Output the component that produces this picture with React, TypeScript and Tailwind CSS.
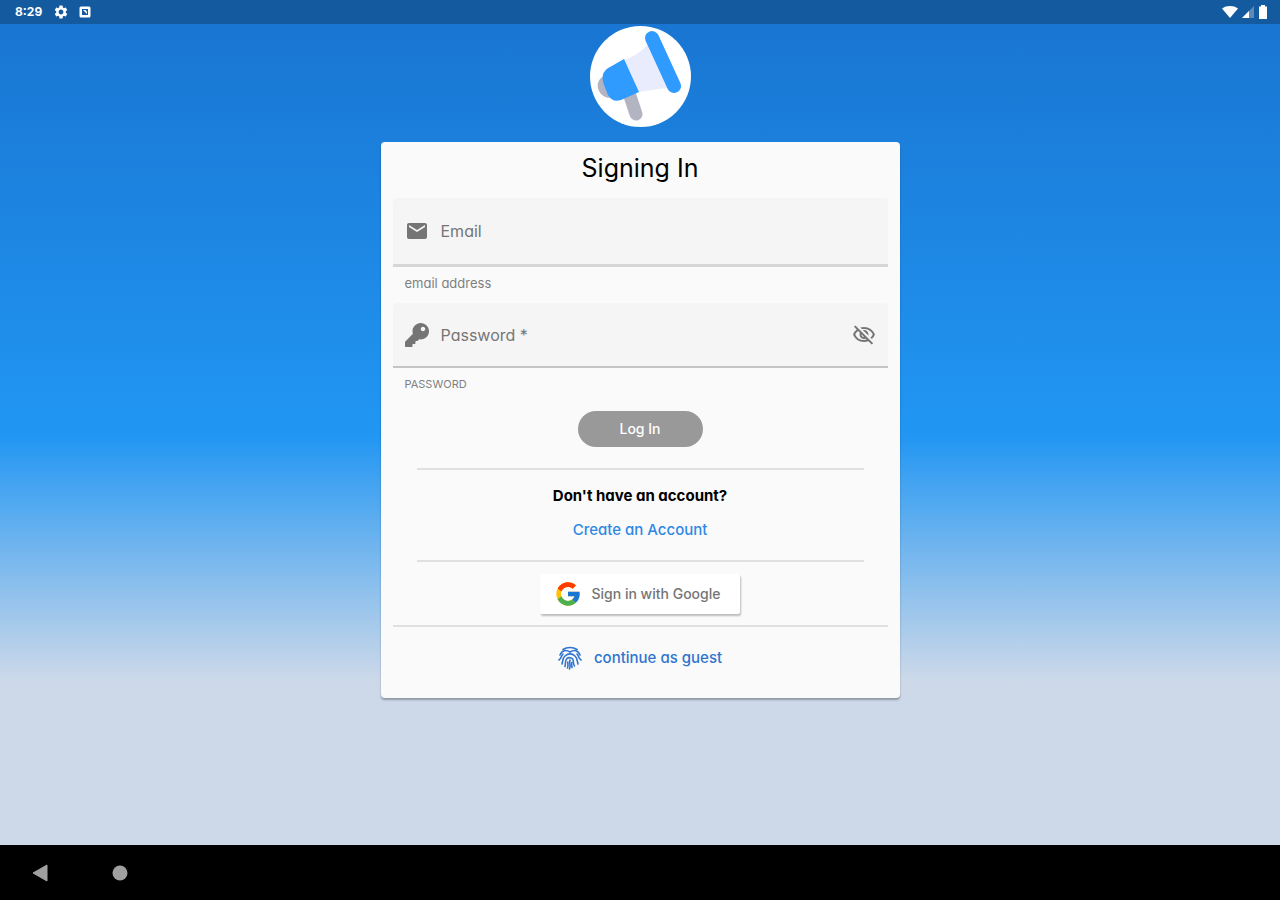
import { useState } from "react";
import { FaKey } from "react-icons/fa";
import { FcGoogle } from "react-icons/fc";
import {
  MdEmail,
  MdOutlineVisibility,
  MdOutlineVisibilityOff,
  MdSettings,
} from "react-icons/md";

const StatusBar = () => (
  <header className="flex h-6 items-center justify-between bg-[#145a9f] pl-[15px] pr-3 text-white">
    <div className="flex items-center gap-2.5">
      <span className="w-7 text-xs font-bold">8:29</span>
      <MdSettings className="h-4 w-4" />
      <svg viewBox="0 0 12 12" className="h-3 w-3">
        <rect x="0.5" y="0.5" width="11" height="11" rx="1.5" fill="currentColor" />
        <path d="M3 3h6v6H3z" fill="#145a9f" />
        <path d="M4 4l4 4V5.500L6.500 4z" fill="currentColor" />
      </svg>
    </div>
    <div className="flex items-center gap-1">
      <svg viewBox="0 0 16 12" className="h-3 w-4">
        <path d="M0 2.500C4.500-.8 11.500-.8 16 2.500L8 12z" fill="currentColor" />
      </svg>
      <svg viewBox="0 0 12 12" className="h-3 w-3">
        <path d="M12 0v12H0z" fill="currentColor" opacity="0.3" />
        <path d="M7 5v7H0z" fill="currentColor" />
      </svg>
      <svg viewBox="0 0 10 14" className="h-3.5 w-2.5">
        <path d="M3 0h4v1.500h2V14H1V1.500h2z" fill="currentColor" />
      </svg>
    </div>
  </header>
);

const Logo = () => (
  <svg viewBox="0 0 101 101" className="h-[101px] w-[101px]" role="img" aria-label="Megaphone">
    <circle cx="50.5" cy="50.5" r="50.5" fill="#fff" />
    <path d="M14 50c-6 3-8 9-5 15 3 6 9 8 14 6z" fill="#b3b4c2" />
    <path d="M40 70l6 18" stroke="#b3b4c2" strokeWidth="13" strokeLinecap="round" />
    <path d="M34 34C43 31 51 26 57 19l20 43c-9 1-19 2-28 4z" fill="#e9ecfd" />
    <path d="M34 33l15 33-18 8c-6 2-10 0-13-5l-4-10c-2-6-2-11 1-14 1-2 3-3 5-4z" fill="#2f9bff" />
    <path d="M62 12l22 48" stroke="#2f9bff" strokeWidth="14" strokeLinecap="round" />
  </svg>
);

const GuestIcon = () => (
  <svg
    viewBox="0 0 24 24"
    className="h-6 w-6"
    fill="none"
    stroke="currentColor"
    strokeWidth="1.6"
    strokeLinecap="round"
  >
    <path d="M5 3.500C9 .8 15 .8 19 3.500" />
    <path d="M2 9c2-5 6-5.500 10-3 4-2.500 8-2 10 3" />
    <path d="M1 14c2.500-1.500 2-4 4-6" />
    <path d="M23 14c-2.500-1.500-2-4-4-6" />
    <path d="M4 18c1-3 .5-6 3-8 3-2.500 7-2.500 10 0 2.500 2 2 5 3 8" />
    <path d="M7 20.500c1-3-.5-6 2-8 2-1.500 5-1 6 1 .8 2-.5 4 1.500 6.500" />
    <path d="M12 14c-1 3 1 5-.5 9" />
    <path d="M9.500 22c1-2 .3-4 .3-6M14 21.500c-.5-1.500-.5-3-.2-5" />
  </svg>
);

const LoginForm = () => {
  const [visible, setVisible] = useState(false);

  return (
    <form className="flex flex-col" onSubmit={(e) => e.preventDefault()}>
      <div className="flex h-[69px] items-center rounded-t border-b-3 border-[#d6d6d6] bg-[#f5f5f5] px-3 text-[#757575]">
        <MdEmail className="h-6 w-6" />
        <label htmlFor="email" className="ml-3 text-base">
          Email
        </label>
        <input
          id="email"
          type="email"
          aria-describedby="email-hint"
          className="ml-2 min-w-0 flex-1 bg-transparent text-base outline-none"
        />
      </div>
      <p id="email-hint" className="mt-2 px-3 text-[13px] leading-4 text-[#808080]">
        email address
      </p>

      <div className="mt-3 flex h-[65px] items-center rounded-t border-b-2 border-[#c4c4c4] bg-[#f5f5f5] px-3 text-[#757575]">
        <FaKey className="h-6 w-6" />
        <label htmlFor="password" className="ml-3 text-base">
          Password *
        </label>
        <input
          id="password"
          type={visible ? "text" : "password"}
          aria-describedby="password-hint"
          className="ml-2 min-w-0 flex-1 bg-transparent text-base outline-none"
        />
        <button
          type="button"
          aria-label="Toggle password visibility"
          onClick={() => setVisible(!visible)}
        >
          {visible ? (
            <MdOutlineVisibility className="h-6 w-6" />
          ) : (
            <MdOutlineVisibilityOff className="h-6 w-6" />
          )}
        </button>
      </div>
      <p id="password-hint" className="mt-2 px-3 text-[11px] leading-4 text-[#808080]">
        PASSWORD
      </p>

      <button
        type="submit"
        className="mt-[19px] h-9 w-[125px] self-center rounded-full bg-[#999] text-sm font-medium text-white"
      >
        Log In
      </button>
    </form>
  );
};

const NavigationBar = () => (
  <nav className="flex h-[55px] items-center gap-16 bg-black px-8 text-[#a0a0a0]">
    <button aria-label="Back">
      <svg viewBox="0 0 16 18" className="h-[18px] w-4">
        <path d="M15 1v16L1 9z" fill="currentColor" stroke="currentColor" strokeLinejoin="round" />
      </svg>
    </button>
    <button aria-label="Home">
      <svg viewBox="0 0 16 16" className="h-4 w-4">
        <circle cx="8" cy="8" r="7.5" fill="currentColor" />
      </svg>
    </button>
  </nav>
);

export default function App() {
  return (
    <div className="flex min-h-screen flex-col font-[Inter,'Open_Sans',sans-serif] [font-feature-settings:'cv11']">
      <StatusBar />
      <main className="flex flex-1 flex-col items-center bg-[linear-gradient(#1976d2,#2196f3_50%,#cdd9e9_80%)] px-4 pb-8 pt-0.5">
        <Logo />
        <section className="mt-[15px] w-full max-w-[519px] rounded bg-[#fafafa] px-3 pb-7 shadow-[0_2px_2px_rgba(0,0,0,0.3)]">
          <h1 className="pb-3 pt-2 text-center text-[25px] leading-9">Signing In</h1>
          <LoginForm />

          <hr className="mx-6 mt-[21px] border-t-2 border-[#e0e0e0]" />
          <p className="mt-4 text-center text-[15px] font-bold leading-5">
            Don't have an account?
          </p>
          <p className="mt-3.5 text-center text-[15px] font-medium leading-5">
            <a href="#register" className="text-[#2f88e4]">
              Create an Account
            </a>
          </p>
          <hr className="mx-6 mt-5 border-t-2 border-[#e0e0e0]" />

          <button className="mx-auto mt-3 flex h-10 items-center rounded-xs bg-white pl-3.5 pr-5 text-sm font-medium text-[#757575] shadow-[1px_2px_2px_rgba(0,0,0,0.25)]">
            <FcGoogle className="mr-2.5 h-7 w-7" />
            Sign in with Google
          </button>
          <hr className="mt-[11px] border-t-2 border-[#e0e0e0]" />

          <a
            href="#guest"
            className="mx-auto mt-[19px] flex w-fit items-center gap-3 text-[15px] font-medium text-[#2f74cf]"
          >
            <GuestIcon />
            continue as guest
          </a>
        </section>
      </main>
      <NavigationBar />
    </div>
  );
}
